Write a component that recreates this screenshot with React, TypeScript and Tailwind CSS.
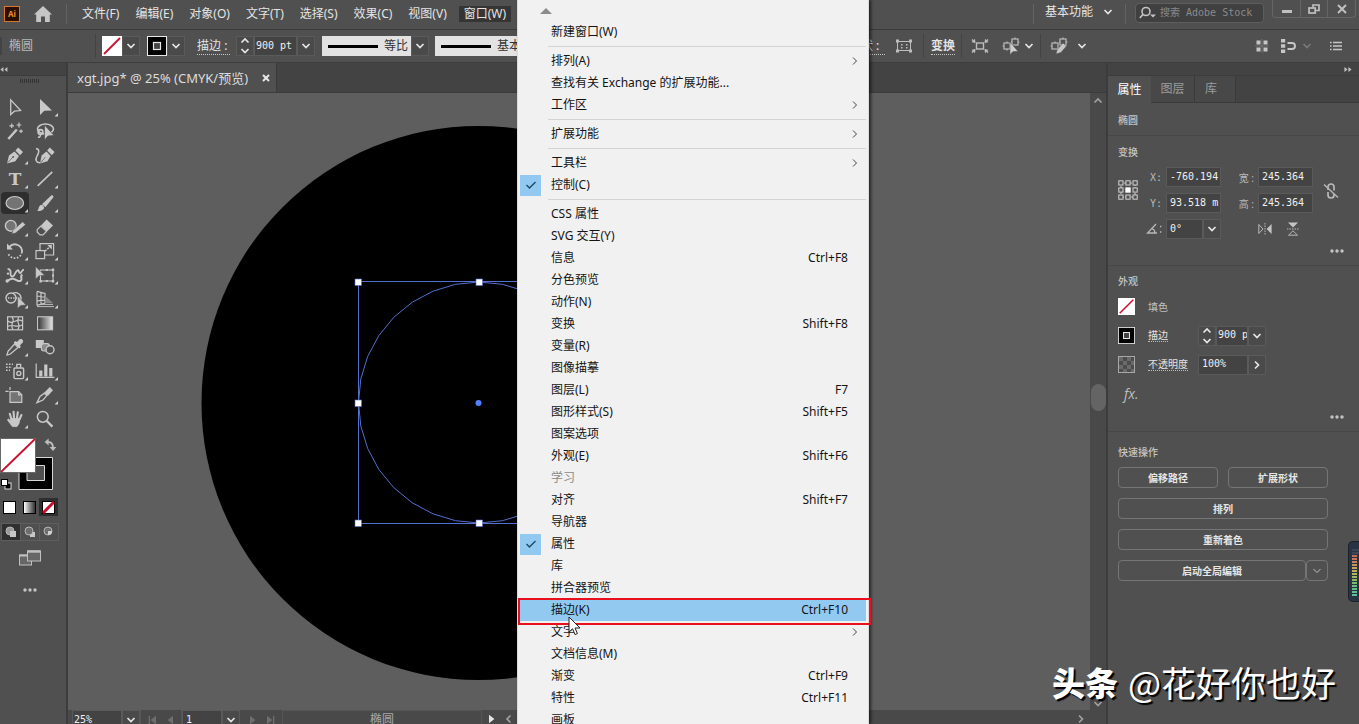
import React, { type ReactNode } from "react";

const UI = "font-['Noto_Sans','Noto_Sans_CJK_SC',sans-serif]";
const MONO = "font-['DejaVu_Sans_Mono','Noto_Sans_CJK_SC',monospace]";

function Chevron({ dir = "down", className = "" }: { dir?: "down" | "up" | "right" | "left"; className?: string }) {
  const d = {
    down: "M1.5 3 L5 6.5 L8.5 3",
    up: "M1.5 6.5 L5 3 L8.5 6.5",
    right: "M3 1.5 L6.5 5 L3 8.5",
    left: "M6.5 1.5 L3 5 L6.5 8.5",
  }[dir];
  return (
    <svg viewBox="0 0 10 10" className={`size-[10px] shrink-0 ${className}`} fill="none" stroke="currentColor" strokeWidth="1.7" aria-hidden="true">
      <path d={d} />
    </svg>
  );
}

function DropButton({ label, className = "", dir = "down" }: { label: string; className?: string; dir?: "down" | "right" }) {
  return (
    <button type="button" aria-label={label} className={`flex h-5 w-[18px] shrink-0 items-center justify-center border border-[#5a5a5a] bg-[#4a4a4a] text-[#e6e6e6] ${className}`}>
      <Chevron dir={dir} />
    </button>
  );
}

function Spinner({ label }: { label: string }) {
  return (
    <button type="button" aria-label={label} className="flex h-5 w-[18px] shrink-0 flex-col items-center justify-center border border-[#5a5a5a] bg-[#4a4a4a] text-[#e6e6e6]">
      <Chevron dir="up" />
      <Chevron dir="down" />
    </button>
  );
}

function Field({ label, value, className = "" }: { label: string; value: string; className?: string }) {
  return (
    <input aria-label={label} defaultValue={value} className={`h-5 min-w-0 shrink-0 border border-[#5a5a5a] bg-[#434343] pb-[2px] pl-[3px] text-[10px] text-[#f0f0f0] outline-none ${MONO} ${className}`} />
  );
}

function NoneSwatch({ className = "" }: { className?: string }) {
  return (
    <svg viewBox="0 0 20 20" className={className} aria-hidden="true">
      <rect width="20" height="20" fill="#fff" />
      <path d="M2 18 L18 2" stroke="#c8102e" strokeWidth="1.8" />
    </svg>
  );
}

function StrokeSwatch({ className = "" }: { className?: string }) {
  return (
    <svg viewBox="0 0 20 20" className={className} aria-hidden="true">
      <rect x="0.5" y="0.5" width="19" height="19" fill="#000" stroke="#e8e8e8" />
      <rect x="6.5" y="6.5" width="7" height="7" fill="#444" stroke="#e8e8e8" strokeWidth="1.2" />
    </svg>
  );
}

const menuNames = ["文件(F)", "编辑(E)", "对象(O)", "文字(T)", "选择(S)", "效果(C)", "视图(V)"];

function MenuBar() {
  return (
    <header className="flex h-[30px] shrink-0 items-start border-b border-[#3a3a3a] bg-[#505050] text-[#e4e4e4]">
      <div className="ml-1 mt-[6px] flex h-4 w-4 items-center justify-center border border-[#d8792a] bg-[#2b0f02] text-[8px] font-bold text-[#ef8a2e]">Ai</div>
      <button type="button" aria-label="主页" className="ml-[14px] mt-[6px]">
        <svg viewBox="0 0 18 16" className="h-4 w-[18px]" fill="#c6c6c6">
          <path d="M9 0 L18 8.4 L15.8 8.4 L15.8 16 L11 16 L11 10.5 L7 10.5 L7 16 L2.2 16 L2.2 8.4 L0 8.4 Z" />
        </svg>
      </button>
      <div className="ml-[14px] mt-1 h-5 w-px bg-[#636363]" />
      <nav className="ml-[15px] mt-[6px] flex items-center gap-4 text-xs leading-4">
        {menuNames.map((m) => (
          <button key={m} type="button" className="whitespace-nowrap">{m}</button>
        ))}
        <button type="button" className="-ml-1 whitespace-nowrap bg-[#353535] px-[5px]">窗口(W)</button>
      </nav>
      <div className="ml-auto mt-1 h-5 w-px bg-[#636363]" />
      <button type="button" className="ml-[11px] mt-1 flex items-center gap-[10px] text-xs leading-4">
        基本功能
        <Chevron />
      </button>
      <div className="ml-3 mt-1 h-5 w-px bg-[#636363]" />
      <label className="ml-[9px] mt-[3px] flex h-5 w-[129px] items-center rounded-sm border border-[#5e5e5e] bg-[#404040] pl-[3px]">
        <svg viewBox="0 0 18 14" className="h-[14px] w-[18px] shrink-0" fill="none" stroke="#c4c4c4" strokeWidth="1.6">
          <circle cx="7" cy="5.5" r="4" />
          <path d="M4 8.4 L0.8 12" />
          <path d="M11 8.5 L17 8.5 L14 11.5 Z" fill="#c4c4c4" stroke="none" />
        </svg>
        <input aria-label="搜索 Adobe Stock" placeholder="搜索 Adobe Stock" className={`ml-[3px] min-w-0 flex-1 bg-transparent pb-[2px] text-[10px] outline-none placeholder:text-[#8a8a8a] ${MONO}`} />
      </label>
      <div className="ml-2 mr-[3px] flex h-[18px] rounded-b border border-t-0 border-[#666] text-[#c0c0c0]">
        <button type="button" aria-label="最小化" className="flex w-7 items-center justify-center border-r border-[#666]">
          <span className="mt-[5px] h-[3px] w-[10px] bg-[#c0c0c0]" />
        </button>
        <button type="button" aria-label="还原" className="flex w-[27px] items-center justify-center border-r border-[#666]">
          <svg viewBox="0 0 12 10" className="h-[10px] w-3" fill="none" stroke="#c0c0c0" strokeWidth="1.7">
            <path d="M5 3.5 V1 H11 V6.5 H8" />
            <rect x="1" y="4" width="6.2" height="5" />
          </svg>
        </button>
        <button type="button" aria-label="关闭" className="flex w-[27px] items-center justify-center">
          <svg viewBox="0 0 10 10" className="size-[10px]" stroke="#c0c0c0" strokeWidth="2">
            <path d="M1 1 L9 9 M9 1 L1 9" />
          </svg>
        </button>
      </div>
    </header>
  );
}

function StrokeSample({ name, className = "" }: { name: string; className?: string }) {
  return (
    <button type="button" className={`flex h-5 items-center bg-[#e2e2e2] text-xs leading-4 text-[#333] ${className}`}>
      <span className="mx-[6px] h-[3px] w-[50px] shrink-0 bg-black" />
      <span className="shrink-0">{name}</span>
    </button>
  );
}

function Divider({ className = "" }: { className?: string }) {
  return <div className={`h-6 w-px shrink-0 bg-[#434343] ${className}`} />;
}

function ControlBar() {
  return (
    <div className="flex h-[33px] shrink-0 items-center border-b border-[#3d3d3d] bg-[#505050] text-xs leading-4 text-[#e4e4e4]">
      <div className="flex w-[849px] shrink-0 items-center">
        <div className="h-[18px] w-[2px] bg-[#444]" />
        <span className="ml-[7px] text-[#b8b8b8]">椭圆</span>
        <Divider className="ml-[62px]" />
        <button type="button" aria-label="填色" className="ml-[6px]"><NoneSwatch className="size-5" /></button>
        <DropButton label="填色选项" />
        <button type="button" aria-label="描边颜色" className="ml-[7px]"><StrokeSwatch className="size-5" /></button>
        <DropButton label="描边选项" />
        <span className="ml-3 w-[33px] shrink-0 border-b border-dotted border-[#c8c8c8]">描边 :</span>
        <div className="ml-[6px] flex">
          <Spinner label="调整描边粗细" />
          <Field label="描边粗细" value="900 pt" className="w-[43px] pl-px" />
          <DropButton label="粗细选项" />
        </div>
        <StrokeSample name="等比" className="ml-[7px] w-[89px]" />
        <DropButton label="宽度配置" />
        <StrokeSample name="基本" className="ml-[6px] w-[100px]" />
      </div>
      <span className="w-[36px] shrink-0 whitespace-nowrap border-b border-dotted border-[#c8c8c8]">形状 :</span>
      <button type="button" aria-label="形状属性" className="ml-[10px] shrink-0">
        <svg viewBox="0 0 18 16" className="h-4 w-[18px]" fill="none" stroke="#bdbdbd">
          <rect x="2.5" y="3.5" width="13" height="9" />
          <g fill="#bdbdbd" stroke="none">
            <path d="M1 1.5 h3 v3 h-3z M14 1.5 h3 v3 h-3z M1 11.5 h3 v3 h-3z M14 11.5 h3 v3 h-3z M6 6 h1.5 v1.5 h-1.5z M11 6 h1.5 v1.5 h-1.5z M6 9 h1.5 v1.5 h-1.5z M11 9 h1.5 v1.5 h-1.5z" />
          </g>
        </svg>
      </button>
      <Divider className="ml-[10px]" />
      <a href="#transform" className="ml-[7px] shrink-0 border-b border-dotted border-[#c8c8c8] font-bold">变换</a>
      <Divider className="ml-[6px]" />
      <button type="button" aria-label="隔离选中的对象" className="ml-[9px] shrink-0">
        <svg viewBox="0 0 18 16" className="h-4 w-[18px]" fill="none" stroke="#bdbdbd" strokeWidth="1.4">
          <rect x="5.5" y="5" width="7" height="6" />
          <path d="M1 1.5 L4 4.5 M17 1.5 L14 4.5 M1 14.5 L4 11.5 M17 14.5 L14 11.5" />
          <path d="M0.5 4.2 L4.4 4.8 L4 0.8 Z M17.5 4.2 L13.6 4.8 L14 0.8 Z M0.5 11.8 L4.4 11.2 L4 15.2 Z M17.5 11.8 L13.6 11.2 L14 15.2 Z" fill="#bdbdbd" stroke="none" />
        </svg>
      </button>
      <button type="button" aria-label="选择类似的对象" className="ml-[13px] flex shrink-0 items-center gap-[4px]">
        <svg viewBox="0 0 18 18" className="size-[18px]" fill="none" stroke="#bdbdbd" strokeWidth="1.2">
          <rect x="2" y="6" width="6" height="6" />
          <rect x="10" y="2" width="6" height="6" />
          <path d="M0.5 9 H2 M5 4.5 V6 M5 12 V13.5 M13 0.5 V2 M16 5 H17.5 M9 5 H10" />
          <path d="M8 5 L8 17.5 L11 14.5 L16 14.5 Z" fill="#cfcfcf" stroke="#505050" strokeWidth="0.5" />
        </svg>
        <Chevron />
      </button>
      <Divider className="ml-[6px]" />
      <button type="button" aria-label="编辑相似形状" className="ml-[9px] flex shrink-0 items-center gap-[9px]">
        <svg viewBox="0 0 18 18" className="size-[18px]" fill="none" stroke="#bdbdbd" strokeWidth="1.2">
          <rect x="2" y="6" width="6" height="6" />
          <rect x="10" y="2" width="6" height="6" />
          <path d="M0.5 9 H2 M5 4.5 V6 M13 0.5 V2 M16 5 H17.5 M9 5 H10" />
          <path d="M6 17 L7.2 12.6 L13 6 L16.5 9 L11 15.4 Z" fill="#c6c6c6" stroke="#505050" strokeWidth="0.5" />
        </svg>
        <Chevron />
      </button>
      <div className="ml-auto mr-[17px] flex shrink-0 items-center">
        <button type="button" aria-label="对齐网格">
          <svg viewBox="0 0 14 14" className="size-[14px]" fill="#c6c6c6">
            <path d="M1.5 1.5 h4 v4 h-4z M8.5 1.5 h4 v4 h-4z M1.5 8.5 h4 v4 h-4z M8.5 8.5 h4 v4 h-4z" />
            <path d="M7 0 V14 M0 7 H14" stroke="#8a8a8a" strokeWidth="0.6" />
          </svg>
        </button>
        <button type="button" aria-label="对齐像素" className="ml-3 flex items-center gap-[6px]">
          <svg viewBox="0 0 15 14" className="h-[14px] w-[15px]" fill="#c6c6c6">
            <path d="M0 0 h4.2 v3.6 h-4.2z M0 5.2 h4.2 v3.6 h-4.2z M0 10.4 h4.2 v3.6 h-4.2z" />
            <path d="M6.5 4 H11 A3 3 0 0 1 11 10 H6.5" fill="none" stroke="#c6c6c6" strokeWidth="1.9" />
          </svg>
          <Chevron className="text-[#7a7a7a]" />
        </button>
        <button type="button" aria-label="控制菜单" className="ml-[18px]">
          <svg viewBox="0 0 12 10" className="h-[10px] w-3" stroke="#c6c6c6" strokeWidth="1.3">
            <path d="M0 1.5 H1.6 M3 1.5 H12 M0 5 H1.6 M3 5 H12 M0 8.5 H1.6 M3 8.5 H12" />
          </svg>
        </button>
      </div>
    </div>
  );
}

type Tool = { name: string; more?: boolean; active?: boolean; icon: ReactNode };

const G = "#c8c8c8";
const BG = "#505050";

const tools: Tool[] = [
  { name: "选择", icon: <path d="M9.7 3.8 V18.6 L13.4 15.2 L19.6 14.6 Z" fill="none" stroke={G} strokeWidth="1.3" /> },
  { name: "直接选择", more: true, icon: <path d="M9 3 V19 L13.3 14.8 L21 14.4 Z" fill={G} /> },
  {
    name: "魔棒",
    icon: (
      <g stroke={G} fill={G}>
        <path d="M7.3 19 L15.8 9.5" strokeWidth="2.4" />
        <path d="M10.7 3.5 V8 M8.4 5.8 H13 M18 2.6 V7.4 M15.6 5 H20.4 M20 9.4 V13 M18.2 11.2 H21.8" strokeWidth="1.2" />
      </g>
    ),
  },
  {
    name: "套索",
    icon: (
      <g fill="none" stroke={G} strokeWidth="1.6">
        <ellipse cx="14.5" cy="9" rx="8" ry="5" />
        <circle cx="9.5" cy="12" r="2.4" />
        <path d="M9.5 14.4 C9.5 17 8 17.5 7 17" />
        <path d="M13.5 5 V20 L17 16 L23 15.4 Z" fill={G} stroke={BG} strokeWidth="0.7" />
      </g>
    ),
  },
  {
    name: "钢笔",
    more: true,
    icon: (
      <g fill={G}>
        <path d="M6 19.4 L8 11.6 L13.4 7.6 L18 12 L14.4 17.2 Z" />
        <path d="M14.4 6.6 L17.2 3.4 L22 8 L19 11.2 Z" />
        <path d="M6.5 18.8 L12 13" stroke={BG} strokeWidth="0.7" />
        <circle cx="12.2" cy="12.8" r="0.9" fill={BG} />
      </g>
    ),
  },
  {
    name: "曲率",
    icon: (
      <g fill={G}>
        <path d="M9 19.4 L10.6 11.6 L15.4 7.6 L19.6 12 L16.4 17.2 Z" />
        <path d="M16.2 6.6 L18.8 3.4 L23.6 8 L20.8 11.2 Z" />
        <path d="M9.6 18.8 L14.4 13" stroke={BG} strokeWidth="0.7" />
        <path d="M5 4.5 C9 5 8 9 6 12 C4 15.5 5 19 9 18.6" fill="none" stroke={G} strokeWidth="1.5" />
      </g>
    ),
  },
  { name: "文字", more: true, icon: <text x="14" y="17" textAnchor="middle" fill={G} fontSize="17" fontWeight="bold" fontFamily="DejaVu Serif, serif">T</text> },
  { name: "直线段", more: true, icon: <path d="M6.7 17.9 L21.3 3.9" stroke={G} strokeWidth="1.6" /> },
  { name: "椭圆", more: true, active: true, icon: <ellipse cx="13.8" cy="11" rx="8.8" ry="6.5" fill="#747474" stroke={G} strokeWidth="1.2" /> },
  {
    name: "画笔",
    more: true,
    icon: (
      <g fill={G}>
        <path d="M6 19 C8 17.6 7 15.4 9 13.4 C11 12 14 14.4 12.8 16.8 C11.4 19 8.6 19.2 6 19 Z" />
        <path d="M11 12.2 L20.2 3.4 C21.8 2.8 22.8 4 22.2 5.4 L14.4 15.2 Z" />
      </g>
    ),
  },
  {
    name: "Shaper",
    more: true,
    icon: (
      <g>
        <circle cx="9.8" cy="9.8" r="5.4" fill="#747474" stroke={G} strokeWidth="1.4" />
        <path d="M10.6 18 L12 14.2 L21.6 5.8 L24.6 8.8 L14.6 17 Z" fill={G} stroke={BG} strokeWidth="0.6" />
      </g>
    ),
  },
  {
    name: "橡皮擦",
    more: true,
    icon: (
      <g fill={G}>
        <path d="M6.2 13.6 L9.8 10 L15.4 15.4 L12 18.8 H9 L6.2 16 Z" fill="none" stroke={G} strokeWidth="1.2" />
        <path d="M10 9.4 L15.6 3.6 L22 9.6 L16 15.6 Z" />
      </g>
    ),
  },
  {
    name: "旋转",
    more: true,
    icon: (
      <g fill="none" stroke={G} strokeWidth="1.8">
        <path d="M8.6 6.6 A7.2 7.2 0 0 1 21 12" />
        <path d="M21 12 A7.2 7.2 0 0 1 7 13" strokeDasharray="1.6 1.6" />
        <path d="M6 3.5 V9.6 H12 Z" fill={G} stroke="none" />
      </g>
    ),
  },
  {
    name: "比例缩放",
    more: true,
    icon: (
      <g fill="none" stroke={G} strokeWidth="1.2">
        <rect x="5" y="10.6" width="8.6" height="8" />
        <path d="M9 10.6 V3.6 H22.6 V15 H13.6" />
        <path d="M14 11 L19.4 6.4" strokeDasharray="2 1" strokeWidth="1.5" />
        <path d="M20.8 5 V9.4 L16.4 5 Z" fill={G} stroke="none" />
      </g>
    ),
  },
  {
    name: "宽度",
    more: true,
    icon: (
      <g fill="none" stroke={G}>
        <path d="M5.4 17 C8 16.6 9 14.4 12 14.8 C16 15.4 17.6 18.6 20 16.4 C21.6 14.6 18.6 12 21.4 10.6" strokeWidth="2" />
        <path d="M6.6 5 C9.6 5 9.8 7.4 9.6 10 C9.4 12.4 11.4 13.4 13 11.4 C14.6 9.2 14.4 7.4 16.6 6.4 C18.4 5.6 17.4 9 19.2 9 C21 9 20.2 6 23 5.6" strokeWidth="1.8" />
        <circle cx="6.2" cy="17" r="1.7" fill={G} stroke="none" />
        <circle cx="7" cy="9.6" r="1.2" fill={G} stroke="none" />
      </g>
    ),
  },
  {
    name: "自由变换",
    more: true,
    icon: (
      <g fill={G}>
        <rect x="9.5" y="6" width="12.6" height="11" fill="none" stroke={G} strokeWidth="1.1" />
        <path d="M8.4 16 h2.4 v2.4 h-2.4z M20.8 16 h2.4 v2.4 h-2.4z M20.8 4.6 h2.4 v2.4 h-2.4z M14.8 5 h2 v2 h-2z M14.8 16 h2 v2 h-2z M21 10.4 h2 v2 h-2z" />
        <path d="M4.6 2.6 V15 L8 11.8 L13.6 11.2 Z" stroke={BG} strokeWidth="0.5" />
      </g>
    ),
  },
  {
    name: "形状生成器",
    more: true,
    icon: (
      <g fill="none" stroke={G} strokeWidth="1.4">
        <circle cx="10" cy="10" r="5" />
        <path d="M12 5.2 A5.4 5.4 0 1 1 17 15" />
        <path d="M7 10 H20" strokeDasharray="1.4 1.2" />
        <path d="M16.6 8 V20.4 L19.6 17.4 L25 17 Z" fill={G} stroke={BG} strokeWidth="0.5" />
      </g>
    ),
  },
  {
    name: "透视网格",
    more: true,
    icon: (
      <g fill="none" stroke={G} strokeWidth="1.2">
        <path d="M6 3.4 V17.6 M10 4.2 V16.4 M14 5.6 V15 M6 3.4 L14.4 5.6 M6 8 L14.4 9 M6 12.8 L14.4 12.2 M6 17.4 L14.4 15" />
        <path d="M14.4 8 L22 15 H14.4 Z" fill="#858585" stroke="none" />
        <path d="M6 18.6 H23 M10 16.4 H22" strokeWidth="0.9" />
      </g>
    ),
  },
  {
    name: "网格",
    icon: (
      <g fill="none" stroke={G} strokeWidth="1.2">
        <rect x="6.6" y="4.8" width="15" height="13" />
        <path d="M11 5 C15 9 8 12 12 17.6 M18 5 C14 10 21 13 16.6 17.6 M6.6 9 C12 14 16 4.6 21.6 9.4 M6.6 14.6 C11 11 17 17 21.6 12.6" />
      </g>
    ),
  },
  {
    name: "渐变",
    icon: (
      <g>
        <defs>
          <linearGradient id="toolGradient">
            <stop offset="0" stopColor="#333" />
            <stop offset="1" stopColor="#e6e6e6" />
          </linearGradient>
        </defs>
        <rect x="6.6" y="4.8" width="15" height="13" fill="url(#toolGradient)" stroke={G} strokeWidth="1.1" />
      </g>
    ),
  },
  {
    name: "吸管",
    more: true,
    icon: (
      <g>
        <path d="M13.6 8 L17 11.4 L9.4 18 L6 19 L7 15.4 Z" fill="none" stroke={G} strokeWidth="1.3" />
        <path d="M12.6 6.4 L14.6 5 L16 6 L18.6 3.2 C21 2.2 23 4.4 21.8 6.6 L19 9.2 L19.8 11 L18.2 12.4 Z" fill={G} />
      </g>
    ),
  },
  {
    name: "混合",
    icon: (
      <g>
        <rect x="4.8" y="4" width="8" height="8" fill={G} />
        <rect x="10.4" y="7.6" width="8" height="7.4" rx="2.4" fill="#8a8a8a" stroke={G} strokeWidth="1.1" />
        <circle cx="19" cy="13.8" r="4" fill={BG} stroke={G} strokeWidth="1.4" />
      </g>
    ),
  },
  {
    name: "符号喷枪",
    more: true,
    icon: (
      <g fill="none" stroke={G} strokeWidth="1.4">
        <rect x="13" y="8" width="9.6" height="10.6" rx="1" />
        <circle cx="17.8" cy="13.4" r="2" />
        <path d="M15.8 7.6 V4.4 H19.6 V7.6" />
        <path d="M5 4.2 H12 M5 7.2 H11 M5 10.2 H9" strokeDasharray="1.6 1.3" />
      </g>
    ),
  },
  {
    name: "柱形图",
    more: true,
    icon: (
      <g fill={G}>
        <path d="M4.6 3.4 H5.8 V16.8 H23.4 V18 H4.6 Z" />
        <path d="M8.2 10.4 h3.2 v6 h-3.2z M13.2 4.4 h3.2 v12 h-3.2z M18.2 8 h3.2 v8.4 h-3.2z" />
      </g>
    ),
  },
  {
    name: "画板",
    icon: (
      <g stroke={G} strokeWidth="1.2" fill="none">
        <path d="M4.4 7.4 H7.6 M9 3 V6" />
        <path d="M9 7.6 H17.6 L20.8 10.8 V18.4 H9 Z" fill="#747474" />
        <path d="M17.6 7.6 V10.8 H20.8" />
      </g>
    ),
  },
  {
    name: "切片",
    more: true,
    icon: (
      <g fill="none" stroke={G} strokeWidth="1.3">
        <path d="M6 18.6 L9 12.4 L13.4 9.2 L15.8 11.6 L12 16 Z" />
        <path d="M13.4 8.4 L18.8 3 L22 6.2 L16.8 12 Z" fill={G} stroke="none" />
      </g>
    ),
  },
  {
    name: "抓手",
    more: true,
    icon: (
      <g stroke={G} fill={G} strokeLinecap="round" strokeLinejoin="round">
        <path d="M10.4 11 L8.8 5.8 M13 10 L12.6 3.8 M16 10 L16.8 4.2 M18.4 11.6 L20.4 7" strokeWidth="2.1" fill="none" />
        <path d="M9.8 10.6 L18.8 10.6 L18 15.4 L16 18.6 H11.4 L8.4 14.6 L6.4 11.8 L7.6 11 L10 13 Z" strokeWidth="0.8" />
      </g>
    ),
  },
  {
    name: "缩放",
    icon: (
      <g fill="none" stroke={G}>
        <circle cx="11.8" cy="8.8" r="5.4" strokeWidth="1.5" />
        <path d="M15.8 13 L21.4 18.6" strokeWidth="2.4" />
      </g>
    ),
  },
];

function ToolPanel() {
  return (
    <aside className="flex w-[68px] shrink-0 flex-col border-r-2 border-[#3c3c3c] bg-[#505050]">
      <div className="h-[13px] shrink-0 border-b border-[#3c3c3c] bg-[#434343]">
        <svg viewBox="0 0 8 12" className="h-3 w-2" fill="#c0c0c0">
          <path d="M3.4 4 V9 L0.4 6.5 Z M7.4 4 V9 L4.4 6.5 Z" />
        </svg>
      </div>
      <svg viewBox="0 0 20 4" className="mb-[13px] ml-5 mt-[3px] h-1 w-5 shrink-0">
        <path d="M0 2 H20" stroke="#333" strokeWidth="4" strokeDasharray="1 1" />
      </svg>
      <div className="ml-px grid shrink-0 grid-cols-[28px_28px] gap-[2px]">
        {tools.map((t) => (
          <button key={t.name} type="button" aria-label={t.name} className={`h-[22px] w-7 rounded-sm ${t.active ? "bg-[#2e2e2e]" : ""}`}>
            <svg viewBox="0 0 28 22" className="h-[22px] w-7">
              {t.icon}
              {t.more && <path d="M27 17 V20.4 H23.6 Z" fill="#d0d0d0" />}
            </svg>
          </button>
        ))}
      </div>
      <button type="button" aria-label="填色和描边" className="mt-[6px] h-[56px] w-[60px] shrink-0">
        <svg viewBox="0 0 60 56" className="h-[56px] w-[60px]" fill="none">
          <path d="M19 21.5 H52.5 V53.5 H19 Z M27 29.5 V44.5 H44.5 V29.5 Z" fill="#000" fillRule="evenodd" stroke="#d8d8d8" />
          <rect x="0.5" y="2.5" width="35" height="34" fill="#fff" stroke="#6a6a6a" />
          <path d="M1 36 L35 3" stroke="#c8102e" strokeWidth="1.8" />
          <path d="M48 6 C52 6 53 8 53 12" stroke="#bdbdbd" strokeWidth="1.8" />
          <path d="M48.6 2.6 V9.6 L44.6 6 Z M49.6 11 H56.4 L53 15 Z" fill="#bdbdbd" />
          <rect x="5" y="47" width="6" height="6" fill="#000" stroke="#e0e0e0" />
          <rect x="1.5" y="43.5" width="6" height="6" fill="#fff" stroke="#000" />
        </svg>
      </button>
      <div className="mt-[6px] flex h-[18px] shrink-0">
        <button type="button" aria-label="颜色" className="flex w-[19px] items-center justify-center"><span className="h-[13px] w-[13px] border border-black bg-white" /></button>
        <button type="button" aria-label="渐变色" className="flex w-5 items-center justify-center"><span className="h-[13px] w-[13px] border border-black bg-linear-to-r from-white to-[#333]" /></button>
        <button type="button" aria-label="无" className="flex w-[19px] items-center justify-center bg-[#2e2e2e]">
          <svg viewBox="0 0 13 13" className="size-[13px]">
            <rect x="0.5" y="0.5" width="12" height="12" fill="#fff" stroke="#000" />
            <path d="M1 12 L12 1" stroke="#c8102e" strokeWidth="3" />
          </svg>
        </button>
      </div>
      <div className="ml-px mt-[7px] flex h-[18px] w-[58px] shrink-0 border border-[#5e5e5e]">
        {["正常绘图", "背面绘图", "内部绘图"].map((n, i) => (
          <button key={n} type="button" aria-label={n} className={`flex flex-1 items-center justify-center ${i === 0 ? "bg-[#303030]" : "border-l border-[#5e5e5e]"}`}>
            <svg viewBox="0 0 12 12" className="size-3">
              <circle cx="5" cy="5" r="4" fill={i === 0 ? "#9a9a9a" : "#6e6e6e"} stroke="#b8b8b8" />
              {i === 0 && <rect x="5" y="5" width="6" height="6" fill="#c8c8c8" />}
              {i === 1 && <path d="M9 6 H11 V11 H6 V9 A4 4 0 0 0 9 6 Z" fill="#c8c8c8" />}
              {i === 2 && <path d="M5 5 H9 A4 4 0 0 1 5 9 Z" fill="#d0d0d0" />}
            </svg>
          </button>
        ))}
      </div>
      <button type="button" aria-label="更改屏幕模式" className="ml-[19px] mt-[9px] h-4 w-[22px] shrink-0">
        <svg viewBox="0 0 22 16" className="h-4 w-[22px]" stroke="#c0c0c0">
          <rect x="0.5" y="5" width="12" height="10" fill="#666" />
          <path d="M0.5 5.5 H12" strokeWidth="2" />
          <rect x="8.5" y="1" width="13" height="10" fill="#666" />
          <path d="M8.5 1.5 H21.5" strokeWidth="2.4" />
        </svg>
      </button>
      <button type="button" aria-label="编辑工具栏" className="ml-[22px] mt-[22px] flex gap-[2px]">
        <Dots />
      </button>
    </aside>
  );
}

function Dots() {
  return (
    <svg viewBox="0 0 16 4" className="h-1 w-4" fill="#c4c4c4">
      <circle cx="3" cy="2" r="1.7" />
      <circle cx="8" cy="2" r="1.7" />
      <circle cx="13" cy="2" r="1.7" />
    </svg>
  );
}

const handles: [number, number][] = [
  [290, 189], [411, 189], [532, 189], [290, 310], [532, 310], [290, 430], [411, 430], [532, 430],
];

function Artwork() {
  const pts = Array.from({ length: 32 }, (_, i) => {
    const a = (i / 32) * Math.PI * 2;
    return `${(411 + 120.5 * Math.cos(a)).toFixed(1)},${(309.5 + 120.5 * Math.sin(a)).toFixed(1)}`;
  }).join(" ");
  return (
    <svg className="block h-full w-full" aria-label="画板">
      <circle cx="410.5" cy="310" r="277" fill="#000" />
      <polygon points={pts} fill="none" stroke="#5470cf" />
      <rect x="290.5" y="188.5" width="242" height="242" fill="none" stroke="#5470cf" />
      <circle cx="410.5" cy="310" r="3" fill="#4f80ff" />
      {handles.map(([x, y]) => (
        <rect key={`${x}-${y}`} x={x - 3} y={y - 3} width="6.5" height="6.5" fill="#fff" stroke="#5470cf" strokeWidth="0.6" />
      ))}
    </svg>
  );
}

function Tri({ flip = false, bar = false, className = "" }: { flip?: boolean; bar?: boolean; className?: string }) {
  return (
    <svg viewBox="0 0 10 10" className={`size-[10px] ${flip ? "-scale-x-100" : ""} ${className}`} fill="currentColor">
      <path d="M2 0.8 L7.4 5 L2 9.2 Z" />
      {bar && <path d="M8 1 h1.3 v8 h-1.3z" />}
    </svg>
  );
}

function StatusBar() {
  return (
    <footer className="flex h-[14px] shrink-0 items-start overflow-hidden bg-[#494949] text-[#e6e6e6]">
      <Field label="缩放比例" value="25%" className="ml-1 w-[50px] pb-0 pl-px" />
      <DropButton label="缩放选项" />
      <div className="flex h-5 w-[42px] items-center justify-center gap-[7px] border-x border-[#555] text-[#6e6e6e]">
        <button type="button" aria-label="首项"><Tri flip bar /></button>
        <button type="button" aria-label="上一项"><Tri flip /></button>
      </div>
      <Field label="画板编号" value="1" className="w-10 pb-0" />
      <DropButton label="画板选项" />
      <div className="flex h-5 w-[42px] items-center justify-center gap-[7px] text-[#6e6e6e]">
        <button type="button" aria-label="下一项"><Tri /></button>
        <button type="button" aria-label="末项"><Tri bar /></button>
      </div>
      <div className="flex h-5 w-[200px] items-center justify-center border border-[#555] text-xs leading-4 text-[#a8a8a8]">椭圆</div>
      <button type="button" aria-label="状态菜单" className="ml-[5px] mt-1"><Tri /></button>
      <button type="button" aria-label="向左滚动" className="ml-[7px] mt-1 text-[#a0a0a0]"><Chevron dir="left" /></button>
      <button type="button" aria-label="向右滚动" className="ml-auto mr-1 mt-1 text-[#a0a0a0]"><Chevron dir="right" /></button>
    </footer>
  );
}

function DocumentArea() {
  return (
    <main className="flex min-w-0 flex-1 flex-col">
      <div className="flex h-[30px] shrink-0 border-b border-[#3c3c3c] bg-[#434343]">
        <div className="flex w-[209px] items-center justify-between border-r border-[#3a3a3a] bg-[#505050] pl-[9px] pr-[6px] text-[13px] leading-4 text-[#dcdcdc]">
          <span className="whitespace-nowrap">xgt.jpg* @ 25% (CMYK/预览)</span>
          <button type="button" aria-label="关闭文档">
            <svg viewBox="0 0 8 8" className="size-2" stroke="#e8e8e8" strokeWidth="2">
              <path d="M1 1 L7 7 M7 1 L1 7" />
            </svg>
          </button>
        </div>
      </div>
      <div className="flex min-h-0 flex-1">
        <div className="flex min-w-0 flex-1 flex-col">
          <div className="min-h-0 flex-1 bg-[#5e5e5e]"><Artwork /></div>
          <StatusBar />
        </div>
        <div className="flex w-4 shrink-0 flex-col items-center justify-between bg-[#494949] py-[3px] text-[#a0a0a0]">
          <Chevron dir="up" />
          <div className="mb-[10px] h-[27px] w-[15px] rounded-full bg-[#646464]" />
          <Chevron className="mb-3" />
        </div>
      </div>
    </main>
  );
}

function SectionTitle({ children }: { children: ReactNode }) {
  return <h2 className="text-[10px] font-medium leading-4 text-[#c4c4c4]">{children}</h2>;
}

function ActionButton({ children, className = "" }: { children: ReactNode; className?: string }) {
  return (
    <button type="button" className={`h-[21px] rounded-sm border border-[#757575] text-[10px] font-bold leading-4 text-[#e6e6e6] ${className}`}>{children}</button>
  );
}

function PropertiesPanel() {
  const lab = "pr-1 pt-[2px] text-right text-[10px] leading-4 text-[#b8b8b8] whitespace-nowrap";
  return (
    <aside className="flex w-[253px] shrink-0 flex-col border-l-2 border-[#3c3c3c] bg-[#505050]">
      <div className="flex h-[13px] shrink-0 justify-end border-b border-[#3c3c3c] bg-[#434343] pr-[7px]">
        <svg viewBox="0 0 8 12" className="h-3 w-2" fill="#c0c0c0">
          <path d="M0.4 4 V9 L3.6 6.5 Z M4.4 4 V9 L7.6 6.5 Z" />
        </svg>
      </div>
      <div role="tablist" className="flex h-[27px] shrink-0 bg-[#434343] text-xs leading-4 text-[#9c9c9c]">
        <button type="button" role="tab" aria-selected="true" className="w-[43px] bg-[#505050] text-white">属性</button>
        <button type="button" role="tab" aria-selected="false" className="w-[44px] border-b border-r border-[#3a3a3a] bg-[#484848]">图层</button>
        <button type="button" role="tab" aria-selected="false" className="w-[41px] border-b border-r border-[#3a3a3a] bg-[#484848] pr-[8px]">库</button>
        <div className="flex-1 border-b border-[#3a3a3a]" />
      </div>
      <div className="h-[33px] shrink-0 border-b border-[#474747] pl-[10px] pt-[9px]"><SectionTitle>椭圆</SectionTitle></div>

      <section id="transform" className="h-[130px] shrink-0 border-b border-[#474747] pl-[10px] pt-2">
        <SectionTitle>变换</SectionTitle>
        <div className="mt-[7px] flex">
          <button type="button" aria-label="参考点" className="mt-[13px] h-5 w-5 shrink-0">
            <svg viewBox="0 0 20 20" className="size-5" fill="none" stroke="#c8c8c8" strokeWidth="1.1">
              <path d="M3 3 H17 V17 H3 Z" strokeDasharray="2 1" />
              <g fill="#505050">
                <rect x="0.8" y="0.8" width="4.2" height="4.2" /><rect x="7.9" y="0.8" width="4.2" height="4.2" /><rect x="15" y="0.8" width="4.2" height="4.2" />
                <rect x="0.8" y="7.9" width="4.2" height="4.2" /><rect x="15" y="7.9" width="4.2" height="4.2" />
                <rect x="0.8" y="15" width="4.2" height="4.2" /><rect x="7.9" y="15" width="4.2" height="4.2" /><rect x="15" y="15" width="4.2" height="4.2" />
              </g>
              <rect x="7.9" y="7.9" width="4.2" height="4.2" fill="#fff" stroke="#fff" />
            </svg>
          </button>
          <div className="ml-2 grid shrink-0 grid-cols-[20px_55px_37px_55px] items-center gap-y-[6px]">
            <span className={`${lab} ${MONO}`}>X:</span>
            <Field label="X" value="-760.194" />
            <span className={lab}>宽 :</span>
            <Field label="宽" value="245.364" />
            <span className={`${lab} ${MONO}`}>Y:</span>
            <Field label="Y" value="93.518 m" />
            <span className={lab}>高 :</span>
            <Field label="高" value="245.364" />
            <svg viewBox="0 0 16 12" className="h-3 w-4" fill="none" stroke="#b8b8b8" strokeWidth="1.3">
              <path d="M10 1 L1.5 10 H11 M5.6 5.6 C8 6 9 8 8.6 10" />
              <path d="M14 3.5 h1.3 M14 9 h1.3" strokeWidth="1.6" />
            </svg>
            <div className="flex">
              <Field label="旋转" value="0°" className="w-[37px]" />
              <DropButton label="旋转选项" />
            </div>
            <span />
            <div className="flex items-center gap-[15px]">
              <button type="button" aria-label="水平翻转">
                <svg viewBox="0 0 14 12" className="h-3 w-[14px]">
                  <path d="M0.8 1.5 V10.5 L5 6 Z" fill="none" stroke="#b8b8b8" />
                  <path d="M7 0 V12" stroke="#b8b8b8" strokeDasharray="1.5 1" />
                  <path d="M13.6 1 V11 L8.6 6 Z" fill="#c4c4c4" />
                </svg>
              </button>
              <button type="button" aria-label="垂直翻转">
                <svg viewBox="0 0 12 14" className="h-[14px] w-3">
                  <path d="M1 0.4 H11 L6 5.4 Z" fill="#c4c4c4" />
                  <path d="M0 7 H12" stroke="#b8b8b8" strokeDasharray="1.5 1" />
                  <path d="M1.5 13.2 H10.5 L6 8.8 Z" fill="none" stroke="#b8b8b8" />
                </svg>
              </button>
            </div>
          </div>
          <button type="button" aria-label="约束宽度和高度比例" className="ml-[10px] mt-4 h-4 w-4">
            <svg viewBox="0 0 16 16" className="size-4" fill="none" stroke="#b8b8b8" strokeWidth="1.7">
              <path d="M5 7 V4 A3 3 0 0 1 11 4 V7.5 M5 9 V12 A3 3 0 0 0 11 12 V11" />
              <path d="M1 1.5 L15 14.5" strokeWidth="1.4" />
            </svg>
          </button>
        </div>
        <div className="mr-[14px] mt-[10px] flex justify-end"><button type="button" aria-label="更多变换选项" className="flex"><Dots /></button></div>
      </section>

      <section className="h-[166px] shrink-0 border-b border-[#474747] pl-[10px] pt-[7px]">
        <SectionTitle>外观</SectionTitle>
        <div className="mt-[3px] flex flex-col text-[10px] leading-4">
          <div className="flex h-[29px] items-center">
            <NoneSwatch className="size-[17px]" />
            <span className="ml-[13px] text-[#c0c0c0]">填色</span>
          </div>
          <div className="flex h-[29px] items-center">
            <StrokeSwatch className="size-[17px]" />
            <a href="#stroke" className="ml-[13px] border-b border-dotted border-[#bbb] leading-3 text-[#e4e4e4]">描边</a>
            <div className="ml-[30px] flex">
              <Spinner label="调整描边" />
              <Field label="描边" value="900 pt" className="w-8 pl-px" />
              <DropButton label="描边粗细选项" />
            </div>
          </div>
          <div className="flex h-[29px] items-center">
            <svg viewBox="0 0 17 17" className="size-[17px]">
              <rect x="0.5" y="0.5" width="16" height="16" fill="#6a6a6a" stroke="#a8a8a8" />
              <path d="M5 1 h4 v4 h-4z M13 1 h3 v4 h-3z M1 5 h4 v4 h-4z M9 5 h4 v4 h-4z M5 9 h4 v4 h-4z M13 9 h3 v4 h-3z M1 13 h4 v3 h-4z M9 13 h4 v3 h-4z" fill="#4c4c4c" />
            </svg>
            <a href="#opacity" className="ml-[13px] border-b border-dotted border-[#bbb] leading-3 text-[#e4e4e4]">不透明度</a>
            <div className="ml-[10px] flex">
              <Field label="不透明度" value="100%" className="w-[50px]" />
              <DropButton label="不透明度选项" dir="right" />
            </div>
          </div>
          <button type="button" className="ml-[6px] flex h-[29px] items-center font-['Open_Sans',sans-serif] text-sm italic text-[#bdbdbd]">fx.</button>
        </div>
        <div className="mr-[14px] mt-[7px] flex justify-end"><button type="button" aria-label="更多外观选项" className="flex"><Dots /></button></div>
      </section>

      <section className="pl-[10px] pr-[31px] pt-3">
        <SectionTitle>快速操作</SectionTitle>
        <div className="mt-[7px] grid grid-cols-2 gap-[10px]">
          <ActionButton>偏移路径</ActionButton>
          <ActionButton>扩展形状</ActionButton>
          <ActionButton className="col-span-2">排列</ActionButton>
          <ActionButton className="col-span-2">重新着色</ActionButton>
          <div className="col-span-2 flex">
            <ActionButton className="flex-1">启动全局编辑</ActionButton>
            <button type="button" aria-label="编辑选项" className="flex w-[22px] items-center justify-center rounded-sm border border-[#757575] text-[#c0c0c0]"><Chevron className="stroke-1" /></button>
          </div>
        </div>
      </section>
    </aside>
  );
}

type Item = { t: string; k?: string; sub?: boolean; on?: boolean; off?: boolean; hot?: boolean };

const groups: Item[][] = [
  [{ t: "新建窗口(W)" }],
  [{ t: "排列(A)", sub: true }, { t: "查找有关 Exchange 的扩展功能..." }, { t: "工作区", sub: true }],
  [{ t: "扩展功能", sub: true }],
  [{ t: "工具栏", sub: true }, { t: "控制(C)", on: true }],
  [
    { t: "CSS 属性" },
    { t: "SVG 交互(Y)" },
    { t: "信息", k: "Ctrl+F8" },
    { t: "分色预览" },
    { t: "动作(N)" },
    { t: "变换", k: "Shift+F8" },
    { t: "变量(R)" },
    { t: "图像描摹" },
    { t: "图层(L)", k: "F7" },
    { t: "图形样式(S)", k: "Shift+F5" },
    { t: "图案选项" },
    { t: "外观(E)", k: "Shift+F6" },
    { t: "学习", off: true },
    { t: "对齐", k: "Shift+F7" },
    { t: "导航器" },
    { t: "属性", on: true },
    { t: "库" },
    { t: "拼合器预览" },
    { t: "描边(K)", k: "Ctrl+F10", hot: true },
    { t: "文字", sub: true },
    { t: "文档信息(M)" },
    { t: "渐变", k: "Ctrl+F9" },
    { t: "特性", k: "Ctrl+F11" },
    { t: "画板" },
  ],
];

function WindowMenu() {
  return (
    <div role="menu" className="absolute inset-y-0 left-[517px] w-[352px] overflow-hidden border-l border-r border-[#dcdcdc] bg-[#f1f1f1] px-[2px] text-xs text-[#141414] shadow-[2px_0_3px_rgba(0,0,0,0.6)]">
      <div className="flex h-[21px] items-center pl-5">
        <svg viewBox="0 0 12 6" className="h-[6px] w-3" fill="#8c8c8c"><path d="M6 0 L12 6 H0 Z" /></svg>
      </div>
      {groups.map((g, gi) => (
        <div key={gi} role="group">
          {gi > 0 && <div className="ml-7 flex h-[7px] items-center"><div className="h-px w-full bg-[#d4d4d4]" /></div>}
          {g.map((it) => (
            <button
              key={it.t}
              type="button"
              role="menuitem"
              className={`flex h-[22px] w-full items-center pr-[6px] text-left leading-4 ${it.hot ? "bg-[#91c9f0]" : ""} ${it.off ? "text-[#8a8a8a]" : ""}`}
            >
              <span className={`flex h-[21px] w-[21px] items-center justify-center ${it.on ? "bg-[#91c9f0]" : ""}`}>
                {it.on && (
                  <svg viewBox="0 0 12 10" className="h-[10px] w-3" fill="none" stroke="#1d4a66" strokeWidth="1.4"><path d="M1.5 5 L4.5 8 L10.5 2" /></svg>
                )}
              </span>
              <span className="ml-[10px] flex-1 whitespace-nowrap">{it.t}</span>
              {it.k && <span className="mr-3">{it.k}</span>}
              {it.sub && <Chevron dir="right" className="stroke-1 text-[#444]" />}
            </button>
          ))}
        </div>
      ))}
    </div>
  );
}

const levels = ["#c46a5a", "#c9735a", "#c9825a", "#c6935a", "#c5a35a", "#bfb05a", "#b2b85a", "#9fb95f", "#8aba68", "#78bc72", "#6bbd7d", "#62be88", "#5dbf90", "#5ac098"];

function Meter() {
  return (
    <div className="absolute right-0 top-[542px] flex h-[59px] w-[10px] flex-col gap-px rounded-l bg-[#2a3342] pl-[3px] pt-[7px] ring-1 ring-[#1b2029]">
      <span className="h-[2px] bg-[#3b4658]" />
      <span className="h-[2px] bg-[#3b4658]" />
      {levels.map((c) => (
        <span key={c} className="h-[2px] w-[5px]" style={{ backgroundColor: c }} />
      ))}
    </div>
  );
}

export default function App() {
  return (
    <div className={`relative flex h-screen flex-col overflow-hidden bg-[#505050] ${UI}`}>
      <MenuBar />
      <ControlBar />
      <div className="flex min-h-0 flex-1">
        <ToolPanel />
        <DocumentArea />
        <PropertiesPanel />
      </div>
      <WindowMenu />
      <div className="pointer-events-none absolute left-[518px] top-[598px] h-[27px] w-[353px] border-2 border-[#e8101c]" />
      <svg viewBox="0 0 13 20" className="pointer-events-none absolute left-[568px] top-[616px] h-5 w-[13px]" aria-hidden="true">
        <path d="M1 1 V16 L4.6 12.8 L7 18.6 L9.4 17.6 L7 12 H12 Z" fill="#fff" stroke="#222" strokeWidth="1" />
      </svg>
      <Meter />
      <div className="pointer-events-none absolute bottom-[18px] right-[23px] flex items-center gap-[10px] whitespace-nowrap font-['Noto_Sans_CJK_SC',sans-serif] text-white [text-shadow:2px_2px_1px_#000]">
        <span className="text-[33px] font-black leading-[48px]">头条</span>
        <span className="text-[35px] leading-[48px]">@花好你也好</span>
      </div>
    </div>
  );
}
